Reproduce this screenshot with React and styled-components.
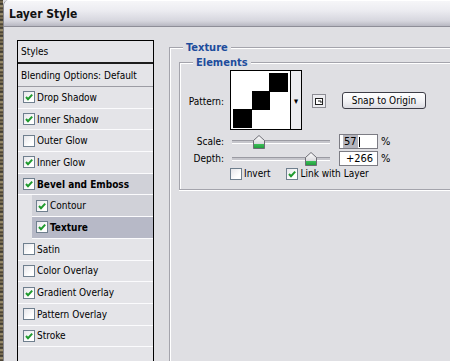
import React from "react";
import styled, { createGlobalStyle } from "styled-components";

const GlobalStyle = createGlobalStyle`
  html, body {
    margin: 0;
    padding: 0;
    background: #dfdfe3;
  }
  body {
    font-family: "DejaVu Sans Condensed", "DejaVu Sans", sans-serif;
    font-size: 10px;
    color: #000;
  }
`;

const styleRows = [
  { name: "Drop Shadow", on: true },
  { name: "Inner Shadow", on: true },
  { name: "Outer Glow", on: false },
  { name: "Inner Glow", on: true },
  { name: "Bevel and Emboss", on: true, bold: true, tone: "mid" },
  { name: "Contour", on: true, sub: true, tone: "mid" },
  { name: "Texture", on: true, sub: true, bold: true, tone: "sel" },
  { name: "Satin", on: false },
  { name: "Color Overlay", on: false },
  { name: "Gradient Overlay", on: true },
  { name: "Pattern Overlay", on: false },
  { name: "Stroke", on: true },
];

const tones = {
  plain: "transparent",
  mid: "#d0d1d8",
  sel: "#b7b9c7",
};

const Check = ({ on }) => (
  <Box>
    {on && (
      <svg width="10" height="10" viewBox="0 0 10 10">
        <path d="M2 5 L4 7.2 L8.2 2.6" fill="none" stroke="#1f9a2e" strokeWidth="2" />
      </svg>
    )}
  </Box>
);

const Thumb = ({ pos }) => (
  <Knob style={{ left: `${pos}%` }}>
    <svg width="12" height="14" viewBox="0 0 12 14">
      <defs>
        <linearGradient id="kg" x1="0" y1="0" x2="0" y2="1">
          <stop offset="0" stopColor="#ffffff" />
          <stop offset="0.65" stopColor="#d8d8dc" />
          <stop offset="0.66" stopColor="#3cbf58" />
          <stop offset="1" stopColor="#1f9a3a" />
        </linearGradient>
      </defs>
      <path d="M6 0.5 L11.5 5.5 L11.5 13.5 L0.5 13.5 L0.5 5.5 Z" fill="url(#kg)" stroke="#6c6c74" />
    </svg>
  </Knob>
);

const Slider = ({ pos }) => (
  <Track>
    <Thumb pos={pos} />
  </Track>
);

const App = () => {
  return (
    <>
      <GlobalStyle />
      <Screen>
        <Strip />
        <Dialog>
          <TitleBar>Layer Style</TitleBar>
          <Body>
            <List>
              <Header>Styles</Header>
              <Blend>Blending Options: Default</Blend>
              {styleRows.map((r) => (
                <Row key={r.name} sub={r.sub} tone={r.tone || "plain"}>
                  <Check on={r.on} />
                  <RowText bold={r.bold}>{r.name}</RowText>
                </Row>
              ))}
            </List>
            <Group>
              <Legend>Texture</Legend>
              <Inner>
                <Legend>Elements</Legend>
                <Grid>
                  <Label>Pattern:</Label>
                  <PatternLine>
                    <Swatch>
                      <svg width="59" height="58" viewBox="0 0 59 58">
                        <rect width="59" height="58" fill="#fff" />
                        <rect x="38" y="2" width="19" height="19" fill="#000" />
                        <rect x="21" y="20" width="18" height="19" fill="#000" />
                        <rect x="2" y="38" width="19" height="19" fill="#000" />
                      </svg>
                      <Drop>▾</Drop>
                    </Swatch>
                    <IconButton>
                      <svg width="14" height="14" viewBox="0 0 14 14">
                        <rect x="0.5" y="0.5" width="13" height="13" fill="#ececf0" stroke="#8c8c94" />
                        <rect x="3.5" y="4.5" width="7" height="6" fill="#fff" stroke="#202020" />
                        <path d="M6 7 L9 7 L9 9" fill="none" stroke="#202020" />
                      </svg>
                    </IconButton>
                    <Button>Snap to Origin</Button>
                  </PatternLine>

                  <Label>Scale:</Label>
                  <SlideLine>
                    <Slider pos={27.5} />
                    <Field>
                      <Picked>57</Picked>
                      <Caret />
                    </Field>
                    <Unit>%</Unit>
                  </SlideLine>

                  <Label>Depth:</Label>
                  <SlideLine>
                    <Slider pos={80.5} />
                    <Field center>+266</Field>
                    <Unit>%</Unit>
                  </SlideLine>

                  <span />
                  <Options>
                    <Option>
                      <Check on={false} />
                      Invert
                    </Option>
                    <Option>
                      <Check on />
                      Link with Layer
                    </Option>
                  </Options>
                </Grid>
              </Inner>
            </Group>
          </Body>
        </Dialog>
      </Screen>
    </>
  );
};

const Screen = styled.div`
  width: 450px;
  height: 361px;
  overflow: hidden;
  display: flex;
  background: #dfdfe3;
`;

const Strip = styled.div`
  width: 3px;
  flex: none;
  background: repeating-linear-gradient(
    180deg,
    #3b352a 0px,
    #8d7f5e 2px,
    #2c2a26 4px,
    #b3a47c 6px,
    #4a4336 8px
  );
`;

const Dialog = styled.div`
  flex: 1;
  display: flex;
  flex-direction: column;
  border-left: 1px solid #86868e;
  border-top-left-radius: 6px;
  overflow: hidden;
  background: #dfdfe3;
`;

const TitleBar = styled.div`
  height: 25px;
  flex: none;
  display: flex;
  align-items: center;
  padding-left: 5px;
  padding-top: 1px;
  font-weight: bold;
  font-size: 12px;
  color: #111;
  background: linear-gradient(180deg, #f7f7f9 0%, #ececf1 40%, #d6d6de 80%, #b8b8c2 100%);
  border-bottom: 1px solid #8e8e98;
  box-shadow: inset 0 1px 0 #ffffff;
`;

const Body = styled.div`
  flex: 1;
  display: flex;
  align-items: stretch;
  padding: 13px 0 0 13px;
  min-height: 0;
`;

const List = styled.div`
  width: 135px;
  flex: none;
  border: 1px solid #000;
  border-bottom: none;
  background: #e4e4e8;
  display: flex;
  flex-direction: column;
`;

const Header = styled.div`
  height: 21px;
  display: flex;
  align-items: center;
  padding-left: 3px;
  border-bottom: 2px solid #1c1c1c;
`;

const Blend = styled.div`
  height: 22px;
  display: flex;
  align-items: center;
  padding-left: 3px;
  border-bottom: 1px solid #9c9ca4;
`;

const Row = styled.div`
  height: 20.7px;
  display: flex;
  align-items: center;
  gap: 2px;
  margin-left: ${(p) => (p.sub ? "14px" : "0")};
  padding-left: ${(p) => (p.sub ? "4px" : "5px")};
  background: ${(p) => tones[p.tone]};
  border-bottom: 1px solid #fbfbfd;
`;

const RowText = styled.span`
  font-weight: ${(p) => (p.bold ? "bold" : "normal")};
  white-space: nowrap;
`;

const Box = styled.span`
  width: 10px;
  height: 10px;
  flex: none;
  display: inline-flex;
  align-items: center;
  justify-content: center;
  border: 1px solid #6f7f8e;
  background: linear-gradient(135deg, #e6e6ea 0%, #ffffff 70%);
`;

const Group = styled.fieldset`
  margin: 1px 0 0 15px;
  padding: 0 0 0 9px;
  width: 400px;
  height: 400px;
  flex: none;
  border: 1px solid #a4a4ac;
  border-right: none;
  border-bottom: none;
  box-shadow: inset 1px 1px 0 #ffffff;
`;

const Legend = styled.legend`
  margin-left: 4px;
  padding: 0 3px;
  color: #1d4c9c;
  font-weight: bold;
  font-size: 11px;
  line-height: 13px;
  background: #dfdfe3;
`;

const Inner = styled.fieldset`
  margin: 2px 0 0 0;
  padding: 1px 0 8px 0;
  border: 1px solid #a4a4ac;
  border-right: none;
  box-shadow: inset 1px 1px 0 #ffffff, 0 1px 0 #ffffff;

  & > legend {
    margin-left: 13px;
  }
`;

const Grid = styled.div`
  display: grid;
  grid-template-columns: 44px auto;
  column-gap: 6px;
  align-items: center;
`;

const Label = styled.span`
  text-align: right;
  white-space: nowrap;
`;

const PatternLine = styled.div`
  display: flex;
  align-items: center;
  height: 60px;
  margin-bottom: 3px;
`;

const Swatch = styled.div`
  display: flex;
  height: 58px;
  border: 1px solid #000;
  background: #fff;
`;

const Drop = styled.span`
  width: 10px;
  border-left: 1px solid #000;
  background: #ececf0;
  display: flex;
  align-items: center;
  justify-content: center;
  font-size: 9px;
  padding-top: 2px;
`;

const IconButton = styled.span`
  display: flex;
  margin-left: 10px;
  margin-top: 1px;
`;

const Button = styled.button`
  margin-left: 16px;
  margin-top: 1px;
  width: 84px;
  height: 17px;
  padding: 0;
  font-family: inherit;
  font-size: 10px;
  color: #000;
  border: 1px solid #3e3e48;
  border-radius: 3px;
  background: linear-gradient(180deg, #ffffff 0%, #f2f2f5 55%, #dcdce2 100%);
`;

const SlideLine = styled.div`
  display: flex;
  align-items: center;
  height: 17px;
  margin-left: 2px;
`;

const Track = styled.div`
  position: relative;
  width: 98px;
  height: 2px;
  border-top: 1px solid #9a9aa2;
  border-bottom: 1px solid #ffffff;
  background: #c6c6cc;
`;

const Knob = styled.span`
  position: absolute;
  top: -6px;
  margin-left: -6px;
  display: flex;
`;

const Field = styled.span`
  width: 33px;
  height: 13px;
  margin-left: 9px;
  padding: 0 1px 0 3px;
  display: flex;
  align-items: center;
  justify-content: ${(p) => (p.center ? "center" : "flex-start")};
  background: #fff;
  border: 1px solid #7c7c84;
  font-size: 11px;
`;

const Picked = styled.span`
  background: #b4b4bc;
  padding: 0 1px;
`;

const Caret = styled.span`
  width: 1px;
  height: 10px;
  background: #000;
  margin-left: 1px;
`;

const Unit = styled.span`
  margin-left: 3px;
  font-size: 11px;
`;

const Options = styled.div`
  display: flex;
  gap: 16px;
  height: 15px;
  margin-top: -1px;
  align-items: center;
`;

const Option = styled.label`
  display: flex;
  align-items: center;
  gap: 2px;
`;

export default App;
